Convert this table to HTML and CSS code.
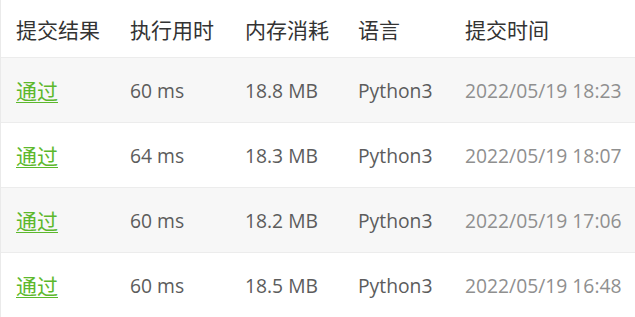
FILE: index.html
```html
<!DOCTYPE html>
<html lang="zh">
<head>
<meta charset="utf-8">
<link rel="stylesheet" href="styles.css">
</head>
<body>
<table class="subs">
  <thead>
    <tr><th>提交结果</th><th>执行用时</th><th>内存消耗</th><th>语言</th><th>提交时间</th></tr>
  </thead>
  <tbody>
    <tr class="alt"><td><a class="ok">通过</a></td><td>60 ms</td><td>18.8 MB</td><td>Python3</td><td class="time">2022/05/19 18:23</td></tr>
    <tr><td><a class="ok">通过</a></td><td>64 ms</td><td>18.3 MB</td><td>Python3</td><td class="time">2022/05/19 18:07</td></tr>
    <tr class="alt"><td><a class="ok">通过</a></td><td>60 ms</td><td>18.2 MB</td><td>Python3</td><td class="time">2022/05/19 17:06</td></tr>
    <tr><td><a class="ok">通过</a></td><td>60 ms</td><td>18.5 MB</td><td>Python3</td><td class="time">2022/05/19 16:48</td></tr>
  </tbody>
</table>
</body>
</html>
```
FILE: styles.css
```css
html, body { margin: 0; padding: 0; background: #fff; }
body {
  font-family: "Open Sans", "Noto Sans CJK SC", sans-serif;
  border-left: 1px solid #eaeaea;
  height: 317px;
  box-sizing: border-box;
  overflow: hidden;
}
.subs {
  border-collapse: collapse;
  width: 100%;
}
.subs th, .subs td {
  text-align: left;
  padding: 0 0 0 15px;
  white-space: nowrap;
}
.subs th {
  font-weight: normal;
  font-size: 21px;
  color: #333;
  height: 57px;
}
.subs td {
  font-size: 19.3px;
  color: #5c5c5c;
  height: 64px;
  border-top: 1px solid #ececec;
}
.subs thead tr { border-bottom: 1px solid #ececec; }
.subs tr.alt td { background: #f7f7f7; }
.subs th:nth-child(1), .subs td:nth-child(1) { width: 99px; }
.subs th:nth-child(2), .subs td:nth-child(2) { width: 100px; }
.subs th:nth-child(3), .subs td:nth-child(3) { width: 98px; }
.subs th:nth-child(4), .subs td:nth-child(4) { width: 92px; }
.subs td.time { color: #8f8f8f; }
.ok {
  color: #5cb82c;
  font-size: 21px;
  text-decoration: underline;
  text-decoration-thickness: 1px;
  text-underline-offset: 3px;
}
```
